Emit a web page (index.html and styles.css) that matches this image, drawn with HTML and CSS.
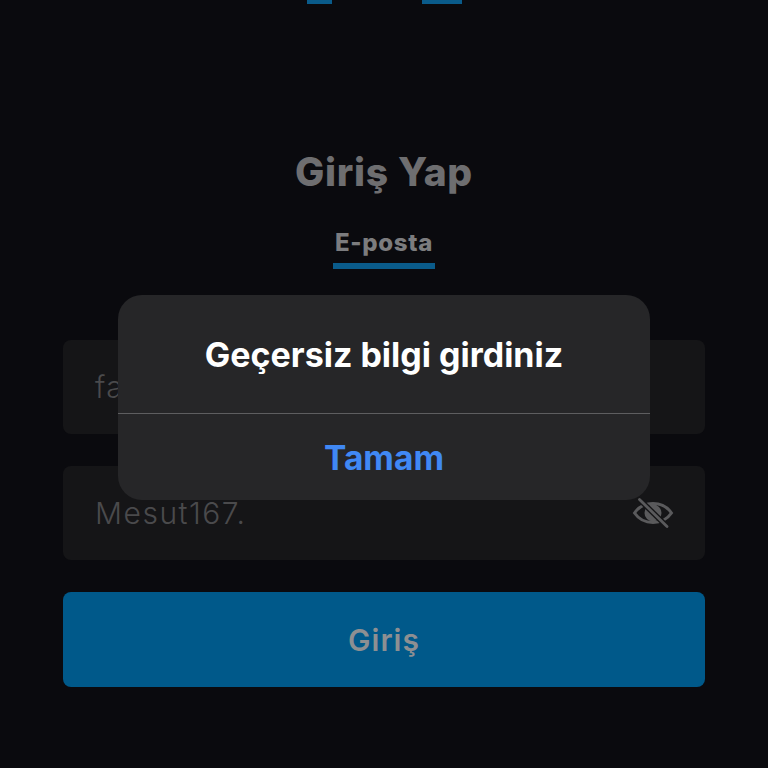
FILE: index.html
```html
<!DOCTYPE html>
<html lang="tr">
<head>
<meta charset="utf-8">
<title>Giriş Yap</title>
<link rel="stylesheet" href="styles.css">
</head>
<body>
<main class="screen">
  <div class="logo-marks">
    <span class="mark mark-a"></span>
    <span class="mark mark-b"></span>
  </div>
  <h1 class="title">Giriş Yap</h1>
  <div class="tab">
    <span class="tab-label">E-posta</span>
    <span class="tab-line"></span>
  </div>
  <form class="form">
    <div class="field"><span class="field-text">fa</span></div>
    <div class="field">
      <span class="field-text">Mesut167.</span>
      <svg class="eye" viewBox="0 0 42 32" width="42" height="32" aria-hidden="true">
        <path d="M2.500 16C7 9.500 13.500 6.500 21 6.500S35 9.500 39.500 16C35 22.500 28.500 25.500 21 25.500S7 22.500 2.500 16Z" fill="none" stroke="currentColor" stroke-width="3"/>
        <circle cx="21" cy="16" r="8.500" fill="currentColor"/>
        <path d="M7.500 2.500 35 29.500" stroke="#151517" stroke-width="5.500"/>
        <path d="M7.500 2.500 35 29.500" stroke="currentColor" stroke-width="2.800" stroke-linecap="round"/>
      </svg>
    </div>
    <div class="submit">Giriş</div>
  </form>
  <div class="alert" role="alertdialog">
    <div class="alert-title">Geçersiz bilgi girdiniz</div>
    <div class="alert-action">Tamam</div>
  </div>
</main>
</body>
</html>
```
FILE: styles.css
```css
* { box-sizing: border-box; }
html, body { margin: 0; padding: 0; background: #0a0a0e; }
.screen {
  position: relative;
  width: 768px;
  height: 768px;
  padding: 0 63px;
  overflow: hidden;
  display: flex;
  flex-direction: column;
  background: #0a0a0e;
  font-family: Inter, sans-serif;
}
.logo-marks { display: flex; height: 4px; padding-left: 244px; gap: 90px; flex: none; }
.mark { display: block; height: 4px; background: #0a5b8a; }
.mark-a { width: 25px; }
.mark-b { width: 40px; }
.title {
  margin: 147px 0 0;
  height: 42px;
  font-size: 39px;
  line-height: 42px;
  font-weight: 800;
  text-align: center;
  color: #6e6e70;
  letter-spacing: 0.7px;
}
.tab {
  align-self: center;
  margin-top: 37px;
  width: 102px;
  display: flex;
  flex-direction: column;
  align-items: center;
}
.tab-label { height: 26px; font-size: 24px; line-height: 26px; font-weight: 800; color: #7c7c7e; letter-spacing: 0.7px; }
.tab-line { margin-top: 7px; width: 102px; height: 6px; background: #0a5b8a; }
.form { margin-top: 71px; display: flex; flex-direction: column; gap: 32px; }
.field {
  height: 94px;
  padding: 0 32px;
  border-radius: 8px;
  background: #151517;
  display: flex;
  align-items: center;
  justify-content: space-between;
}
.field-text { font-size: 30px; font-weight: 300; color: #4a4a4c; letter-spacing: 1.500px; }
.eye { color: #5a5a5c; margin-right: -1px; }
.submit {
  height: 95px;
  border-radius: 8px;
  background: #00598a;
  display: flex;
  align-items: center;
  justify-content: center;
  color: #8d8f92;
  font-size: 30px;
  font-weight: 600;
  letter-spacing: 1px;
}
.alert {
  position: absolute;
  left: 118px;
  top: 295px;
  width: 532px;
  height: 205px;
  border-radius: 24px;
  background: #262628;
  display: flex;
  flex-direction: column;
}
.alert-title {
  height: 119px;
  border-bottom: 1px solid #5e5e60;
  display: flex;
  align-items: center;
  justify-content: center;
  color: #fff;
  font-size: 34px;
  font-weight: 700;
}
.alert-action {
  flex: 1;
  padding-top: 2px;
  display: flex;
  align-items: center;
  justify-content: center;
  color: #4088f4;
  font-size: 33.500px;
  font-weight: 700;
}
```
